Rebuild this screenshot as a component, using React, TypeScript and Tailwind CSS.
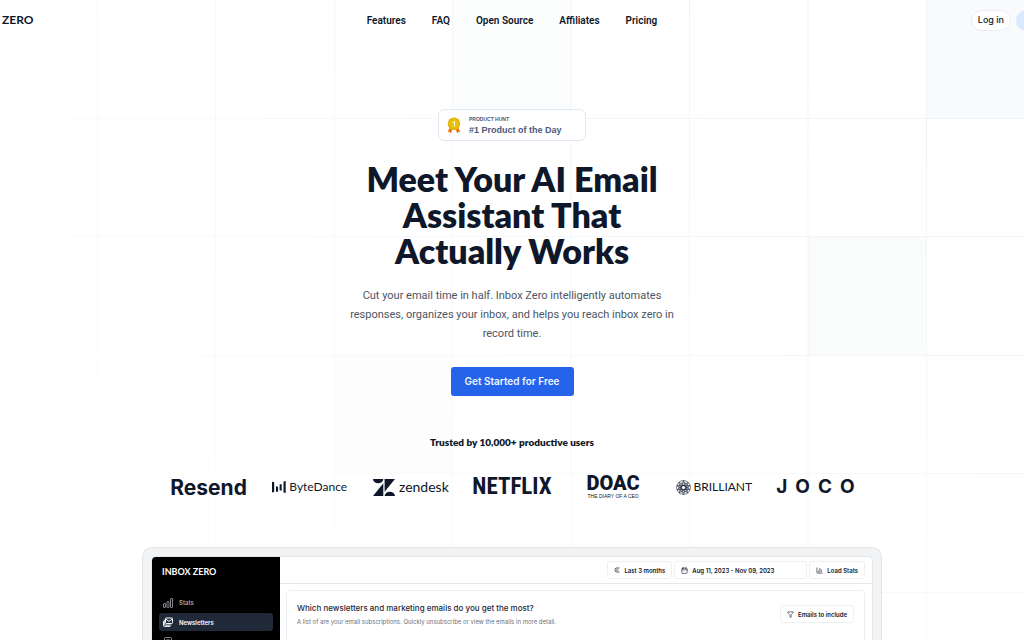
import type { ReactNode } from "react";
import { Calendar, ChartColumn, Filter } from "lucide-react";

const STEP = 118.4;
const COLUMNS = [97.5, 215.5, 334.5, 452.5, 571, 689.5, 808, 926.5];
const ROWS = [118.5, 236.5, 355.5, 473.5, 592.5];

function GridBackground() {
  return (
    <svg aria-hidden="true" className="absolute inset-y-0 left-1/2 h-160 w-256 -translate-x-1/2" viewBox="0 0 1024 640">
      <defs>
        <linearGradient id="fade" x1="0" y1="1" x2="1" y2="0">
          <stop offset="0.1" stopColor="#fff" stopOpacity="0.1" />
          <stop offset="1" stopColor="#fff" stopOpacity="1" />
        </linearGradient>
        <linearGradient id="square" x1="0" y1="0" x2="1" y2="1">
          <stop offset="0" stopColor="#fcfdfd" />
          <stop offset="1" stopColor="#fbfbfb" />
        </linearGradient>
        <mask id="reveal">
          <rect width="1024" height="640" fill="url(#fade)" />
        </mask>
      </defs>
      <rect x="926.5" y="0" width={STEP} height="118.5" fill="#f9fafb" />
      <rect x="808" y="236.5" width={STEP} height={STEP} fill="#fafbfb" />
      <rect x="452.5" y="0" width={STEP} height="118.5" fill="#fcfdfd" />
      <rect x="334.5" y="355.5" width={STEP} height={STEP} fill="url(#square)" opacity="0.5" />
      <g stroke="#eff1f3" strokeWidth="1" mask="url(#reveal)">
        {COLUMNS.map((x) => (
          <line key={x} x1={x} x2={x} y1="0" y2="640" />
        ))}
        {ROWS.map((y) => (
          <line key={y} x1="70" x2="1024" y1={y} y2={y} />
        ))}
      </g>
    </svg>
  );
}

const NAV = ["Features", "FAQ", "Open Source", "Affiliates", "Pricing"];

function Header() {
  return (
    <header className="grid h-10 grid-cols-[1fr_auto_1fr] items-center overflow-hidden">
      <a href="#" className="pl-[2px] font-['Lato',sans-serif] text-[12px] font-bold">
        ZERO
      </a>
      <nav className="flex gap-[26px]">
        {NAV.map((item) => (
          <a key={item} href="#" className="font-['Roboto',sans-serif] text-[10px] font-semibold">
            {item}
          </a>
        ))}
      </nav>
      <div className="-mr-8 flex justify-end gap-[5px]">
        <button className="h-[21px] rounded-full border border-[#e8eef5] bg-white px-[6px] text-[9px] font-medium">
          Log in
        </button>
        <button aria-label="Sign up" className="h-[21px] w-10 shrink-0 rounded-full bg-[#dbeafe]" />
      </div>
    </header>
  );
}

function Medal() {
  return (
    <svg aria-hidden="true" className="h-[17px] w-[14px]" viewBox="0 0 14 17">
      <path d="M2.8 10.5 0.7 15l1.8-.3.9 1.8 2.5-4.6zM11.2 10.5l2.1 4.5-1.8-.3-.9 1.8-2.5-4.6z" fill="#e8730f" />
      <circle cx="7" cy="6.7" r="6.3" fill="#e2b70a" />
      <circle cx="7" cy="6.7" r="4.7" fill="#e6c20c" />
      <path d="M5.6 5.2 7.2 3.9h.8v5.6H6.9V5.4l-1.3.9z" fill="#fff8d6" />
    </svg>
  );
}

function Hero() {
  return (
    <section className="flex flex-col items-center pt-[69px] text-center">
      <a
        href="#"
        className="flex h-8 w-[148px] items-center gap-2 rounded-[6px] border border-[#e0e6f2] bg-white pl-2 text-left font-['Liberation_Sans',sans-serif] text-[#4b587c]"
      >
        <Medal />
        <span className="flex flex-col gap-[2px] pt-[2px]">
          <span className="text-[5px] leading-[6px] font-bold">PRODUCT HUNT</span>
          <span className="text-[9px] leading-[12px] font-bold">#1 Product of the Day</span>
        </span>
      </a>
      <h1 className="mt-5 max-w-[330px] font-['Lato',sans-serif] text-[34px] leading-9 font-extrabold">
        Meet Your AI Email Assistant That Actually Works
      </h1>
      <p className="mt-[17px] max-w-[340px] font-['Roboto',sans-serif] text-[11px] leading-[19px] text-[#4b5563]">
        Cut your email time in half. Inbox Zero intelligently automates responses, organizes your inbox, and helps you
        reach inbox zero in record time.
      </p>
      <button className="mt-6 h-[29px] rounded-[3px] bg-[#2563eb] px-[14px] text-[10px] font-semibold text-[#eff6ff]">
        Get Started for Free
      </button>
    </section>
  );
}

function ByteDance() {
  return (
    <span className="flex items-center gap-[3px] font-['Lato',sans-serif] text-[12px]">
      <svg aria-hidden="true" className="h-3 w-[14px]" viewBox="0 0 14 12">
        <path
          d="M0 .7l2.2.6v9.6L0 11.4zM4 5.2l2.1.5v4.7L4 11zM7.6 3.5l2.1-.5v6.8l-2.1-.5zM11.5.6l2.2-.6v12l-2.2-.6z"
          fill="currentColor"
        />
      </svg>
      ByteDance
    </span>
  );
}

function Zendesk() {
  return (
    <span className="flex items-center gap-1 font-['Lato',sans-serif] text-[14px] leading-none">
      <svg aria-hidden="true" className="h-[17px] w-[22px]" viewBox="0 0 22 17">
        <path
          d="M10.3 4.3V17H0zM10.3 0a5.15 4.3 0 0 1-10.3 0zM11.6 17a5.15 4.3 0 0 1 10.4 0zM11.6 12.7V0H22z"
          fill="currentColor"
        />
      </svg>
      zendesk
    </span>
  );
}

function BrilliantMark() {
  return (
    <svg aria-hidden="true" className="size-[15px]" viewBox="0 0 16 16" fill="none" stroke="currentColor" strokeWidth="0.6">
      <circle cx="8" cy="8" r="7.4" />
      <circle cx="8" cy="8" r="5" />
      <circle cx="8" cy="8" r="2.2" />
      <path d="M8 .6 12.8 14M8 .6 3.2 14M.9 6l11.9 8M15.1 6 3.2 14M.9 6h14.2M8 15.4 3 2.4M8 15.4l5-13M1 10.3 13 2.4M15 10.3 3 2.4M1 10.3h14" />
    </svg>
  );
}

function Logos() {
  return (
    <section className="mx-auto mt-[38px] max-w-[708px]">
      <h2 className="text-center font-['Lato',sans-serif] text-[10px] leading-4 font-extrabold">
        Trusted by 10,000+ productive users
      </h2>
      <div className="mt-5 grid h-8 grid-cols-7 items-center justify-items-center">
        <span className="text-[21px] font-bold">Resend</span>
        <ByteDance />
        <Zendesk />
        <span className="font-['Roboto_Condensed','Roboto',sans-serif] text-[23px] font-bold">NETFLIX</span>
        <span className="flex flex-col items-center">
          <span className="font-['Roboto',sans-serif] text-[20px] leading-[18px] font-black">DOAC</span>
          <span className="font-['Liberation_Sans',sans-serif] text-[5px] leading-2">THE DIARY OF A CEO</span>
        </span>
        <span className="flex items-center gap-[2px] font-['Lato',sans-serif] text-[12px]">
          <BrilliantMark />
          BRILLIANT
        </span>
        <span className="flex gap-2 text-[19px] font-bold">
          <span>J</span>
          <span>O</span>
          <span>C</span>
          <span>O</span>
        </span>
      </div>
    </section>
  );
}

function StatsIcon() {
  return (
    <svg aria-hidden="true" className="size-[10px]" viewBox="0 0 10 10" fill="none" stroke="currentColor" strokeWidth="0.8">
      <rect x="0.5" y="5.5" width="2" height="4" rx="0.5" />
      <rect x="4" y="3.5" width="2" height="6" rx="0.5" />
      <rect x="7.5" y="0.5" width="2" height="9" rx="0.5" />
    </svg>
  );
}

function NewslettersIcon() {
  return (
    <svg aria-hidden="true" className="size-[10px]" viewBox="0 0 10 10" fill="none" stroke="currentColor" strokeWidth="1">
      <rect x="2.5" y="1" width="7" height="5.5" rx="0.8" />
      <path d="M2.7 2 6 4.4 9.3 2M1.3 2.8v4.4q0 .9.9.9h6M.4 4.2v4.2q0 1 1 1h5.8" />
    </svg>
  );
}

function PageIcon() {
  return (
    <svg aria-hidden="true" className="size-[10px]" viewBox="0 0 10 10" fill="none" stroke="currentColor" strokeWidth="0.8">
      <rect x="1.5" y="0.5" width="7" height="9" rx="1" />
      <path d="M3 3h4M3 5h4" />
    </svg>
  );
}

function RangeIcon() {
  return (
    <svg aria-hidden="true" className="size-[6px]" viewBox="0 0 6 6" fill="none" stroke="currentColor" strokeWidth="0.7">
      <path d="M2 1h3.5M0.5 3h4M2 5h3.5M2 1 1 2.2M2 5 1 3.8" />
    </svg>
  );
}

function Chip({ icon, children, className = "" }: { icon: ReactNode; children: ReactNode; className?: string }) {
  return (
    <button
      className={`flex h-[18px] items-center gap-1 rounded-[3px] border border-[#eef0f2] bg-white px-[6px] text-[6px] font-semibold whitespace-nowrap ${className}`}
    >
      {icon}
      {children}
    </button>
  );
}

function Preview() {
  return (
    <section className="mx-auto mt-[45px] max-w-[740px] rounded-t-[10px] border border-b-0 border-[#e3e6e9] bg-[#f1f3f5] px-[9px] pt-[9px]">
      <div className="flex h-[100px] overflow-hidden rounded-t-[4px] bg-white ring-1 ring-[#e3e6e9]">
        <aside className="w-32 shrink-0 bg-black px-[7px] pt-2 text-white">
          <p className="pl-[3px] font-['Lato',sans-serif] text-[9px] leading-[14px] font-bold">INBOX ZERO</p>
          <nav className="mt-[15px] flex flex-col gap-[2px] text-[6px] font-semibold">
            <a href="#" className="flex h-[17px] items-center gap-[6px] px-1 text-[#a3a8b0]">
              <StatsIcon />
              Stats
            </a>
            <a href="#" className="flex h-[18px] items-center gap-[6px] rounded-[3px] bg-[#1f2937] px-1">
              <NewslettersIcon />
              Newsletters
            </a>
            <a href="#" aria-label="Rules" className="flex h-[18px] items-center px-1 text-[#a3a8b0]">
              <PageIcon />
            </a>
          </nav>
        </aside>
        <div className="min-w-0 flex-1">
          <div className="flex h-[27px] items-center justify-end gap-[2px] border-b border-[#e5e7eb] pr-[7px]">
            <Chip icon={<RangeIcon />}>Last 3 months</Chip>
            <Chip icon={<Calendar className="size-[7px]" />} className="w-[133px]">
              Aug 11, 2023 - Nov 09, 2023
            </Chip>
            <Chip icon={<ChartColumn className="size-[7px]" />}>Load Stats</Chip>
          </div>
          <div className="mt-[6px] mr-[7px] ml-[6px] flex h-20 items-start justify-between rounded-[4px] border border-[#eceef0] py-[11px] pr-[10px] pl-[10px]">
            <div>
              <h3 className="text-[8px] leading-3 font-medium text-[#1f2937]">
                Which newsletters and marketing emails do you get the most?
              </h3>
              <p className="mt-[3px] text-[6px] leading-[10px] text-[#6b7280]">
                A list of are your email subscriptions. Quickly unsubscribe or view the emails in more detail.
              </p>
            </div>
            <Chip icon={<Filter className="size-[7px]" />} className="mt-[3px]">
              Emails to include
            </Chip>
          </div>
        </div>
      </div>
    </section>
  );
}

export default function App() {
  return (
    <div className="relative h-screen overflow-hidden bg-white font-['Inter',sans-serif] text-[#0f172a]">
      <GridBackground />
      <div className="relative">
        <Header />
        <main>
          <Hero />
          <Logos />
          <Preview />
        </main>
      </div>
    </div>
  );
}
